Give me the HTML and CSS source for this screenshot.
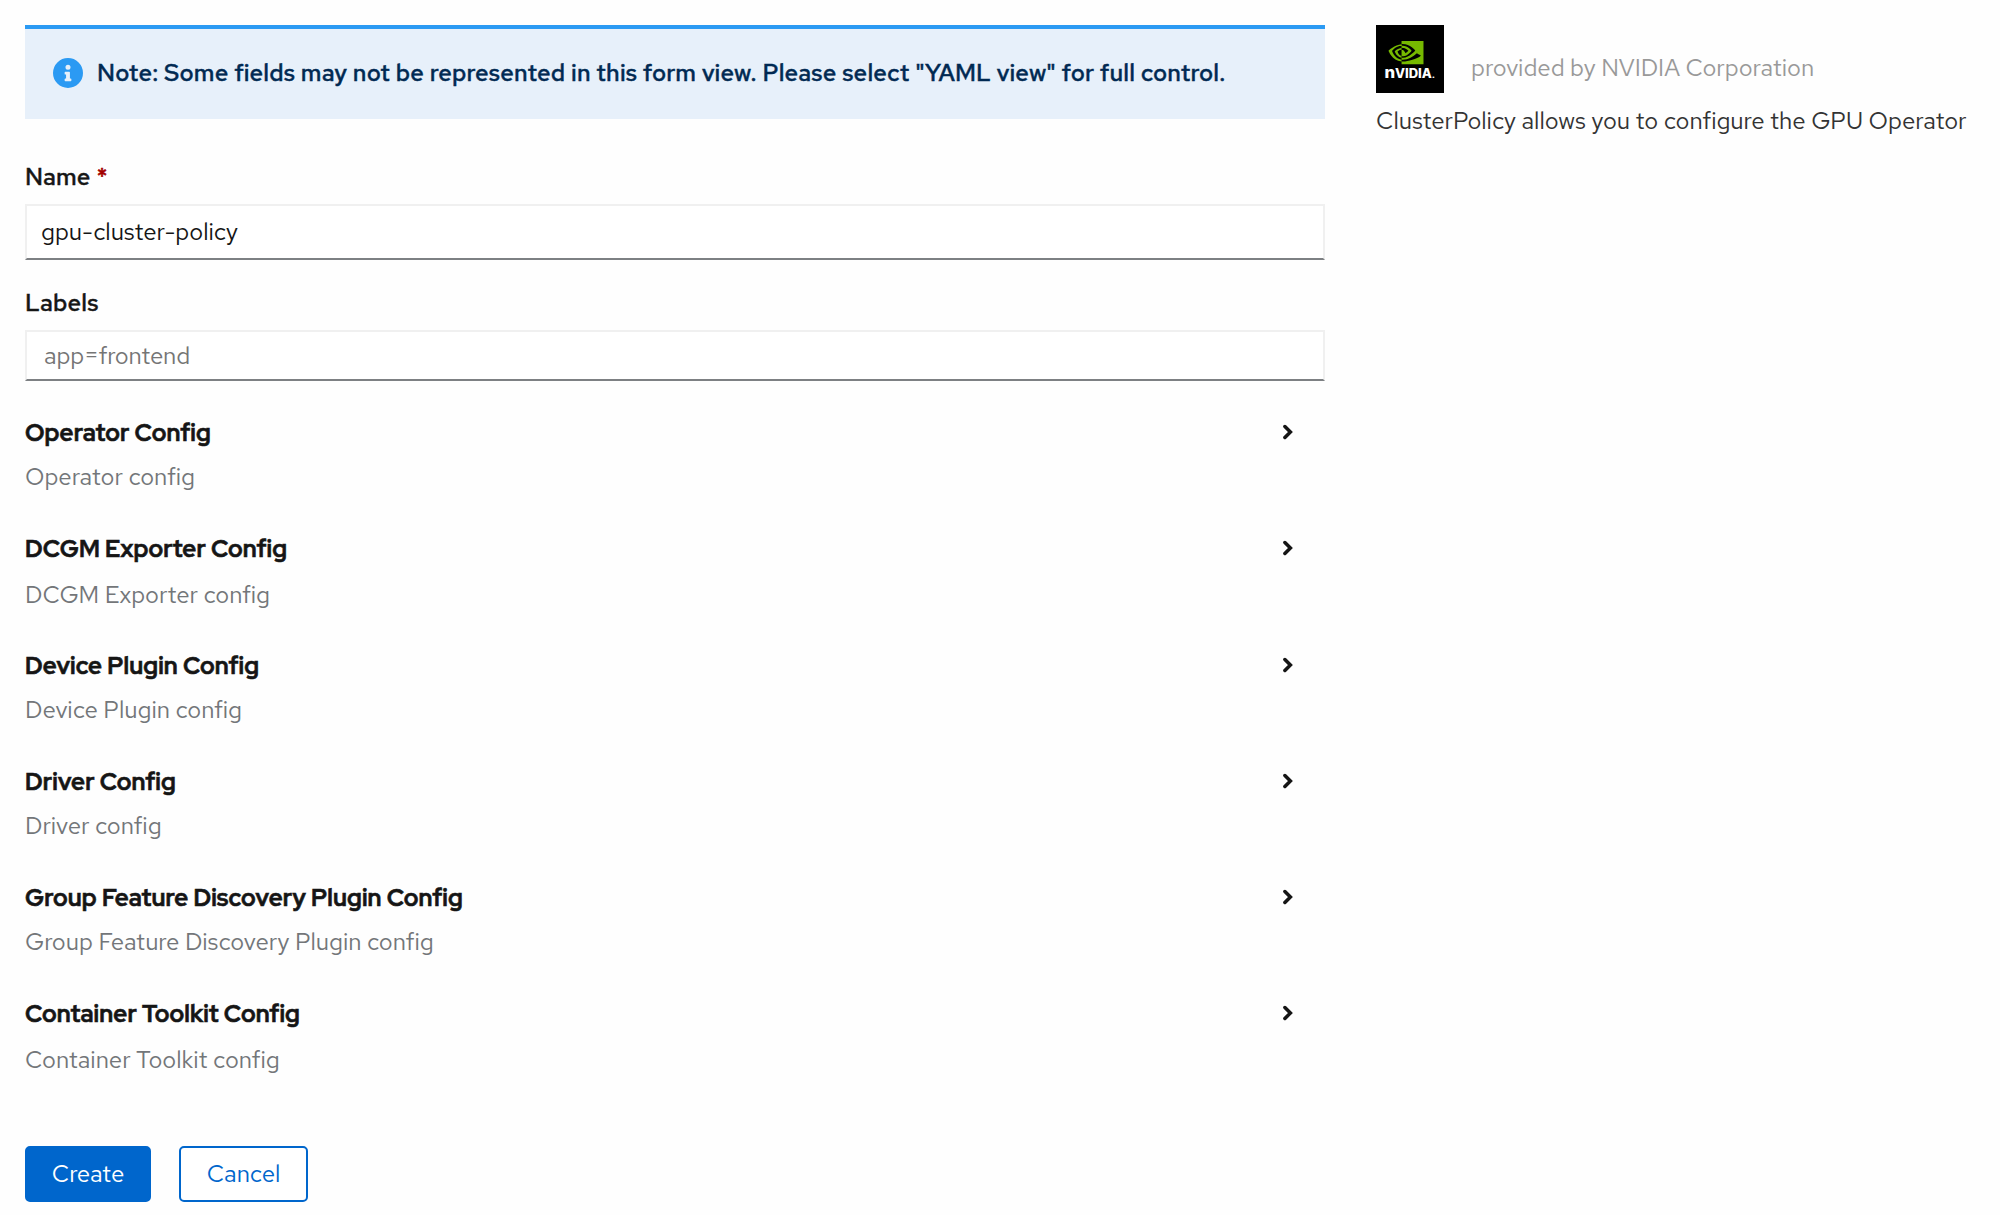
FILE: index.html
```html
<!DOCTYPE html>
<html lang="en">
<head>
<meta charset="utf-8">
<title>Create ClusterPolicy</title>
<link rel="stylesheet" href="styles.css">
</head>
<body>
<svg class="sprite" aria-hidden="true">
  <symbol id="chevron" viewBox="0 0 10 16"><path d="M1.9 2.5 7.4 8l-5.500 5.500" fill="none" stroke="#151515" stroke-width="3.500" stroke-linecap="round" stroke-linejoin="miter"/></symbol>
</svg>
<main class="page">
  <form class="form">
    <div class="alert">
      <svg class="alert-icon" viewBox="0 0 512 512"><path fill="#2b9af3" d="M256 0a256 256 0 1 0 0 512 256 256 0 0 0 0-512zm0 113.500a43 43 0 1 1 0 86 43 43 0 0 1 0-86zm57.500 272.500c0 6.600-5.400 12-12 12h-91c-6.600 0-12-5.400-12-12v-24.800c0-6.600 5.400-12 12-12h12.400v-66h-12.400c-6.600 0-12-5.400-12-12v-24.800c0-6.600 5.400-12 12-12h66.200c6.600 0 12 5.400 12 12v102.800h12.800c6.600 0 12 5.400 12 12z"/></svg>
      <p class="alert-text">Note: Some fields may not be represented in this form view. Please select "YAML view" for full control.</p>
    </div>
    <label class="label label-name" for="name"><span>Name</span><span class="required">*</span></label>
    <input class="input input-name" id="name" type="text" value="gpu-cluster-policy">
    <label class="label label-labels" for="labels">Labels</label>
    <input class="input input-labels" id="labels" type="text" placeholder="app=frontend">

    <div class="sections">
      <section class="section">
        <div class="section-head"><h2 class="title">Operator Config</h2><svg class="chevron"><use href="#chevron"/></svg></div>
        <p class="desc">Operator config</p>
      </section>
      <section class="section section-loose">
        <div class="section-head"><h2 class="title">DCGM Exporter Config</h2><svg class="chevron"><use href="#chevron"/></svg></div>
        <p class="desc">DCGM Exporter config</p>
      </section>
      <section class="section">
        <div class="section-head"><h2 class="title">Device Plugin Config</h2><svg class="chevron"><use href="#chevron"/></svg></div>
        <p class="desc">Device Plugin config</p>
      </section>
      <section class="section">
        <div class="section-head"><h2 class="title">Driver Config</h2><svg class="chevron"><use href="#chevron"/></svg></div>
        <p class="desc">Driver config</p>
      </section>
      <section class="section">
        <div class="section-head"><h2 class="title">Group Feature Discovery Plugin Config</h2><svg class="chevron"><use href="#chevron"/></svg></div>
        <p class="desc">Group Feature Discovery Plugin config</p>
      </section>
      <section class="section section-loose">
        <div class="section-head"><h2 class="title">Container Toolkit Config</h2><svg class="chevron"><use href="#chevron"/></svg></div>
        <p class="desc">Container Toolkit config</p>
      </section>
    </div>

    <div class="actions">
      <button class="button button-primary" type="button">Create</button>
      <button class="button button-secondary" type="button">Cancel</button>
    </div>
  </form>

  <aside class="aside">
    <div class="provider">
      <svg class="logo" viewBox="0 0 68 68">
        <rect width="68" height="68" fill="#000"/>
        <path transform="translate(12.500 10.100) scale(1.458)" fill="#76b900" d="M8.948 8.798v-1.430a6.700 6.700 0 0 1 .424-.018c3.922-.124 6.493 3.374 6.493 3.374s-2.774 3.851-5.750 3.851c-.398 0-.787-.062-1.158-.185v-4.346c1.528.185 1.837.857 2.747 2.385l2.040-1.714s-1.492-1.952-4-1.952a6.016 6.016 0 0 0-.796.035m0-4.735v2.138l.424-.027c5.450-.185 9.010 4.470 9.010 4.470s-4.080 4.964-8.330 4.964c-.370 0-.733-.035-1.095-.097v1.325c.300.035.610.062.910.062 3.957 0 6.820-2.023 9.593-4.408.459.371 2.340 1.263 2.730 1.652-2.633 2.208-8.772 3.984-12.253 3.984-.335 0-.653-.018-.971-.053v1.864H24V4.063zm0 10.326v1.131c-3.657-.654-4.673-4.460-4.673-4.460s1.758-1.944 4.673-2.262v1.237H8.940c-1.528-.186-2.730 1.245-2.730 1.245s.680 2.412 2.739 3.110M2.456 10.900s2.164-3.197 6.500-3.533V6.201C4.153 6.590 0 10.653 0 10.653s2.350 6.802 8.948 7.420v-1.237c-4.840-.600-6.492-5.936-6.492-5.936z"/>
        <text class="wordmark" x="8.500" y="52.700" textLength="50.500" lengthAdjust="spacingAndGlyphs"><tspan class="wordmark-n">n</tspan>VIDIA<tspan class="wordmark-dot">.</tspan></text>
      </svg>
      <span class="provider-name">provided by NVIDIA Corporation</span>
    </div>
    <p class="summary">ClusterPolicy allows you to configure the GPU Operator</p>
  </aside>
</main>
</body>
</html>
```
FILE: styles.css
```css
* { box-sizing: border-box; }
body {
  margin: 0;
  background: #fefefe;
  color: #151515;
  font: 400 24px/28px "Red Hat Text", "Inter", sans-serif;
  letter-spacing: -0.045px;
}
p, h2 { margin: 0; font-size: inherit; white-space: nowrap; }
.sprite { display: none; }

.page {
  display: grid;
  grid-template-columns: 1300px 1fr;
  column-gap: 51px;
  padding: 25px 0 0 25px;
}
.form { display: flex; flex-direction: column; }

.alert {
  display: flex;
  align-items: flex-start;
  gap: 14px;
  height: 94px;
  padding: 30px 28px 0;
  border-top: 4px solid #2b9af3;
  background: #e7f0fa;
}
.alert-icon { width: 30px; height: 30px; margin-top: -1px; }
.alert-text {
  color: #002952;
  font-weight: 500;
  letter-spacing: 0.173px;
  -webkit-text-stroke: 0.500px currentColor;
}

.label { font-weight: 500; letter-spacing: 0.150px; -webkit-text-stroke: 0.500px currentColor; }
.label-name { display: flex; gap: 6px; margin-top: 44px; }
.label-labels { margin-top: 29px; }
.required { color: #a30000; }

.input {
  width: 100%;
  border: 2px solid #f0f0f0;
  border-bottom: 2px solid #7d8083;
  border-radius: 0;
  background: #fff;
  color: #151515;
  font: inherit;
  letter-spacing: inherit;
}
.input-name { height: 56px; margin-top: 13px; padding: 0 14px 2px; }
.input-labels { height: 51px; margin-top: 13px; padding: 0 17px; letter-spacing: -0.150px; }
.input::placeholder { color: #757575; opacity: 1; }

.sections { margin-top: 38px; }
.section { height: 116.3px; }
.section-head {
  display: flex;
  align-items: center;
  justify-content: space-between;
  height: 28px;
  padding-right: 32px;
}
.title {
  font-family: "Red Hat Display", "Red Hat Text", "Inter", sans-serif;
  font-weight: 700;
  letter-spacing: 0.160px;
  -webkit-text-stroke: 0.600px currentColor;
}
.chevron { width: 10px; height: 16px; margin-bottom: 2px; }
.desc { margin-top: 16px; color: #737679; }
.section-loose .desc { margin-top: 17.500px; }

.actions { display: flex; gap: 28px; margin-top: 29.200px; }
.button {
  height: 56px;
  padding: 0;
  border: 2px solid #06c;
  border-radius: 5px;
  font: inherit;
  letter-spacing: inherit;
}
.button-primary { width: 126px; background: #06c; color: #fff; }
.button-secondary { width: 129px; background: #fff; color: #06c; }

.provider { display: flex; align-items: center; gap: 27px; }
.logo { width: 68px; height: 68px; }
.wordmark { fill: #fff; font: 800 12.500px "Inter", sans-serif; }
.wordmark-n { font-size: 16px; }
.wordmark-dot { font-size: 9px; }
.provider-name { margin-top: 18px; color: #999; white-space: nowrap; }
.summary { margin-top: 14px; color: #333; }
```
